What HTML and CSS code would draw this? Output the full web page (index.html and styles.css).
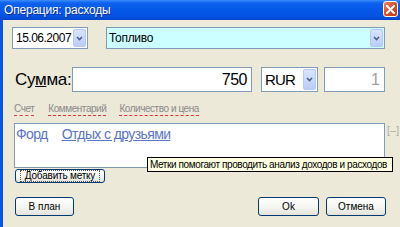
FILE: index.html
```html
<!DOCTYPE html>
<html>
<head>
<meta charset="utf-8">
<link rel="stylesheet" href="styles.css">
</head>
<body>
<div class="window">
  <div class="titlebar">
    <span class="title">Операция: расходы</span>
    <span class="close"><svg width="9" height="9" viewBox="0 0 9 9"><path d="M1 1L8 8M8 1L1 8" stroke="#fff" stroke-width="2" stroke-linecap="square"/></svg></span>
  </div>
  <div class="body">
    <div class="row1">
      <div class="combo date"><span class="val">15.06.2007</span><span class="drop"><svg width="7" height="5" viewBox="0 0 7 5"><path d="M1 1L3.5 3.5L6 1" fill="none" stroke="#4D6185" stroke-width="1.6"/></svg></span></div>
      <div class="combo cat"><span class="val">Топливо</span><span class="drop"><svg width="7" height="5" viewBox="0 0 7 5"><path d="M1 1L3.5 3.5L6 1" fill="none" stroke="#4D6185" stroke-width="1.6"/></svg></span></div>
    </div>
    <div class="row2">
      <span class="sum-label">Су<u>м</u>ма:</span>
      <div class="input amount">750</div>
      <div class="combo cur"><span class="val">RUR</span><span class="drop"><svg width="7" height="5" viewBox="0 0 7 5"><path d="M1 1L3.5 3.5L6 1" fill="none" stroke="#4D6185" stroke-width="1.6"/></svg></span></div>
      <div class="input qty">1</div>
    </div>
    <div class="links">
      <span class="lnk">Счет</span>
      <span class="lnk">Комментарий</span>
      <span class="lnk">Количество и цена</span>
    </div>
    <div class="tagrow">
      <div class="tags"><span class="tag">Форд</span><span class="tag u">Отдых с друзьями</span></div>
      <span class="collapse">[–]</span>
    </div>
    <div class="addrow"><button class="btn add"><span class="focus">Добавить метку</span></button></div>
    <div class="bottom">
      <button class="btn plan">В план</button>
      <div class="right">
        <button class="btn ok">Ok</button>
        <button class="btn cancel">Отмена</button>
      </div>
    </div>
    <div class="tooltip">Метки помогают проводить анализ доходов и расходов</div>
  </div>
</div>
</body>
</html>
```
FILE: styles.css
```css
* { box-sizing: border-box; }
html, body { margin: 0; padding: 0; }
body { width: 400px; height: 227px; overflow: hidden; font-family: "Liberation Sans", Arial, sans-serif; }
.window { width: 400px; height: 227px; display: flex; flex-direction: column; background: #ECE9D8; }
.titlebar {
  height: 20px; flex: none;
  background: linear-gradient(#3B8DFB 0, #0E62EE 3px, #0658E8 50%, #0352E2 85%, #0044C8 100%);
  display: flex; align-items: center; justify-content: space-between;
  padding: 0 2px 0 4px;
}
.title { color: #fff; font-size: 12px; letter-spacing: -0.2px; text-shadow: 1px 1px 0 #0A2F9A; }
.close {
  width: 15px; height: 16px; margin-top: -2px;
  border: 1px solid #fff; border-radius: 3px;
  background: linear-gradient(135deg, #E8886A, #D4512C 50%, #C2380F);
  display: flex; align-items: center; justify-content: center;
}
.body { position: relative; flex: 1; border-left: 3px solid #0A55E0; padding-left: 9px; }
.row1 { display: flex; gap: 18px; margin-top: 7px; height: 22px; }
.combo { display: flex; border: 1px solid #7F9DB9; background: #fff; height: 100%; align-items: stretch; }
.combo .val { flex: 1; display: flex; align-items: center; color: #000; }
.drop {
  width: 13px; margin: 1px; flex: none;
  background: linear-gradient(#D9E4FD, #BACDF8);
  border: 1px solid #B5C8F5; border-radius: 2px;
  display: flex; align-items: center; justify-content: center;
}
.date { width: 76px; }
.date .val { font-size: 12px; padding-left: 3px; letter-spacing: -0.5px; }
.cat { width: 279px; background: #CCFFFF; }
.cat .val { font-size: 12px; padding-left: 2px; letter-spacing: -0.3px; }
.row2 { display: flex; align-items: center; margin-top: 18px; height: 25px; }
.sum-label { font-size: 17px; margin-left: 3px; width: 57px; color: #000; letter-spacing: -0.3px; }
.sum-label u { text-decoration-thickness: 1px; }
.input { border: 1px solid #7F9DB9; background: #fff; height: 100%; display: flex; align-items: center; justify-content: flex-end; font-size: 16px; padding-right: 4px; }
.amount { width: 180px; letter-spacing: -0.5px; }
.cur { width: 57px; margin-left: 9px; }
.cur .val { font-size: 15px; padding-left: 3px; letter-spacing: -0.8px; }
.qty { width: 61px; margin-left: 6px; color: #A0A0A0; }
.links { display: flex; margin-top: 11px; margin-left: 2px; height: 13px; font-size: 10px; color: #8A8A8A; }
.lnk { border-bottom: 1px dashed #E83030; line-height: 11px; letter-spacing: -0.45px; }
.lnk:nth-child(1) { margin-right: 14px; }
.lnk:nth-child(2) { margin-right: 13px; }
.tagrow { display: flex; margin-top: 7px; margin-left: 2px; align-items: flex-start; }
.tags { width: 371px; height: 45px; flex: none; border: 1px solid #7F9DB9; background: #fff; display: flex; padding: 2px 0 0 1px; align-items: flex-start; }
.tag { font-size: 14px; color: #5A74C8; letter-spacing: -0.6px; margin-right: 14px; }
.tag.u { text-decoration: underline; }
.collapse { flex: none; white-space: nowrap; font-size: 10px; letter-spacing: 0.5px; color: #A8A8A8; margin-left: 2px; margin-top: 2px; }
.addrow { margin-top: 1px; margin-left: 3px; height: 14px; }
.btn {
  font-family: "Liberation Sans", Arial, sans-serif; font-size: 10px; color: #000;
  border: 1px solid #003C74; border-radius: 3px;
  background: linear-gradient(#FFFFFF, #F3F3EF 60%, #E3E2DA);
  padding: 0; display: flex; align-items: center; justify-content: center;
}
.add { width: 90px; height: 14px; }
.focus { border: 1px dotted #555; padding: 0 4px; line-height: 10px; letter-spacing: -0.2px; }
.bottom { display: flex; justify-content: space-between; margin-top: 14px; margin-left: 3px; padding-right: 14px; height: 19px; }
.right { display: flex; gap: 7px; }
.plan { width: 59px; height: 19px; }
.ok { width: 61px; height: 19px; }
.cancel { width: 60px; height: 19px; }
.tooltip {
  position: absolute; left: 144px; top: 137px; width: 246px; height: 15px;
  background: #FFFFE1; border: 1px solid #000;
  font-size: 10px; letter-spacing: -0.4px; color: #000;
  display: flex; align-items: center; padding-left: 2px; white-space: nowrap;
}
```
